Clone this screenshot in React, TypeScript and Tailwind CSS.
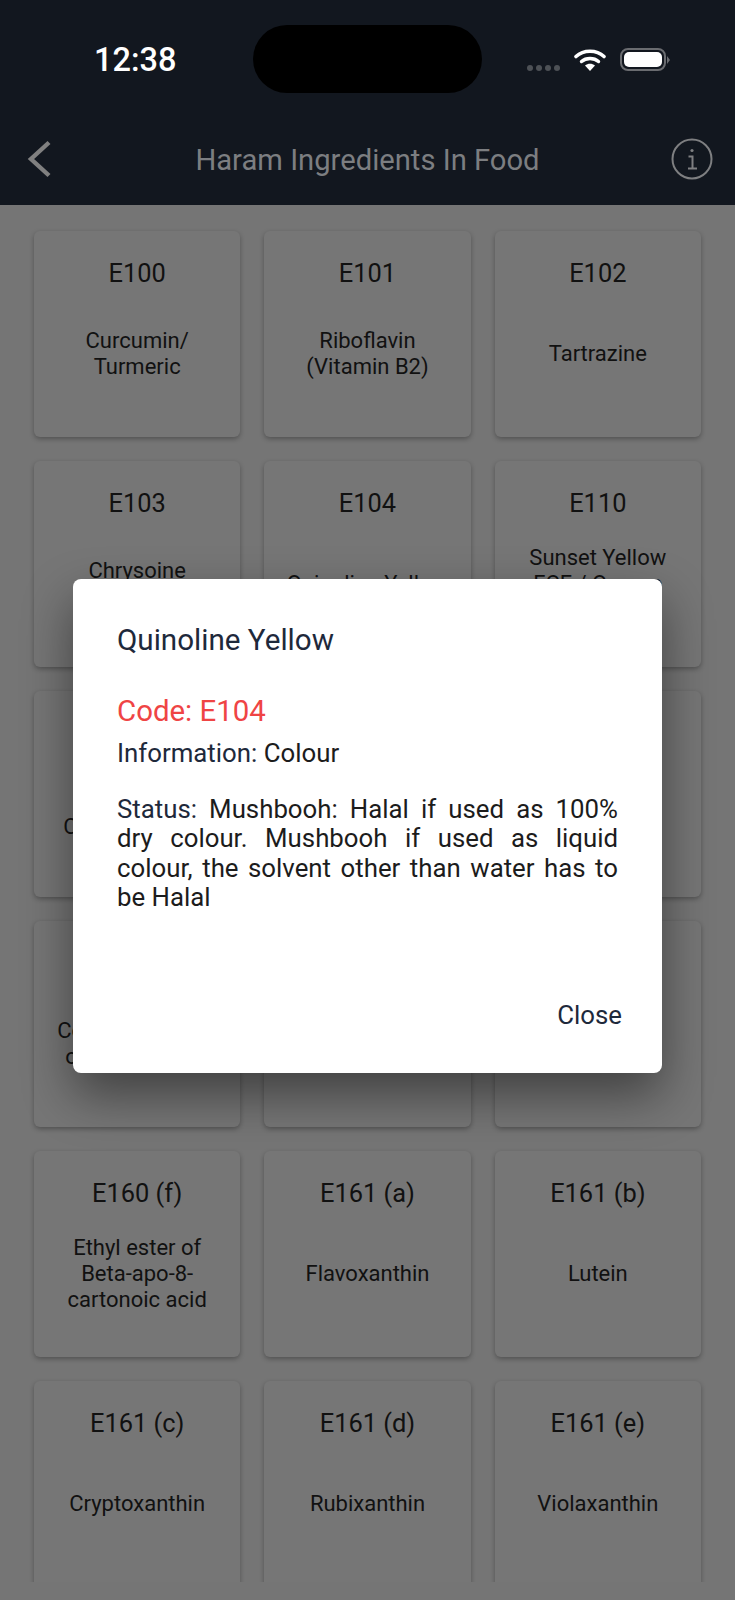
import { ReactNode } from 'react'

const items = [
  { code: 'E100', name: 'Curcumin/ Turmeric' },
  { code: 'E101', name: 'Riboflavin (Vitamin B2)' },
  { code: 'E102', name: 'Tartrazine' },
  { code: 'E103', name: 'Chrysoine Resorcinol' },
  { code: 'E104', name: 'Quinoline Yellow' },
  { code: 'E110', name: 'Sunset Yellow FCF / Orange Yellow S' },
  { code: 'E120', name: 'Cochineal / Carminic Acids' },
  { code: 'E122', name: 'Carmoisine' },
  { code: 'E123', name: 'Amaranth' },
  { code: 'E141', name: 'Copper complex of chlorophylls' },
  { code: 'E160 (a)', name: 'Alpha, Beta, Gamma Carotene' },
  { code: 'E160 (e)', name: 'Beta-apo-8-carotenal' },
  { code: 'E160 (f)', name: 'Ethyl ester of Beta-apo-8-cartonoic acid' },
  { code: 'E161 (a)', name: 'Flavoxanthin' },
  { code: 'E161 (b)', name: 'Lutein' },
  { code: 'E161 (c)', name: 'Cryptoxanthin' },
  { code: 'E161 (d)', name: 'Rubixanthin' },
  { code: 'E161 (e)', name: 'Violaxanthin' },
]

function StatusIcons() {
  return (
    <div className="flex items-start pl-[45px] pt-[48px]">
      <div className="mt-[17px] flex gap-[3px]">
        {[0, 1, 2, 3].map((i) => (
          <span key={i} className="h-[6px] w-[6px] rounded-full bg-[#4d5156]" />
        ))}
      </div>
      <svg className="ml-[14px]" width="32" height="23" viewBox="0 0 32 23" fill="none">
        <path d="M2 8.5C9.5 1.5 22.5 1.5 30 8.5" stroke="white" strokeWidth="3.6" strokeLinecap="round" />
        <path d="M7.5 13.5C12 9.5 20 9.5 24.5 13.5" stroke="white" strokeWidth="3.4" strokeLinecap="round" />
        <path d="M11 17.5C14 15 18 15 21 17.5L16 23Z" fill="white" />
      </svg>
      <div className="ml-[14px] flex items-center">
        <div className="h-[23px] w-[46px] rounded-[8px] border-2 border-[#6a6c70] p-[2px]">
          <div className="h-full w-full rounded-[5px] bg-white" />
        </div>
        <span className="ml-[1px] h-0 w-0 border-y-[4px] border-l-[3px] border-y-transparent border-l-[#6a6c70]" />
      </div>
    </div>
  )
}

function Header() {
  return (
    <header className="h-[205px] bg-[#12171f]">
      <div className="grid h-[119px] grid-cols-[1fr_229px_1fr]">
        <div className="pl-[94px] pt-[40px] text-[32.5px] leading-[40px] font-medium text-white">12:38</div>
        <div className="mt-[25px] h-[68px] rounded-[34px] bg-black" />
        <StatusIcons />
      </div>
      <div className="grid h-[80px] grid-cols-[1fr_auto_1fr] items-center">
        <svg className="ml-[27px]" width="26" height="38" viewBox="0 0 26 38" fill="none">
          <path d="M22 2.5L4 19L22 35.5" stroke="#808080" strokeWidth="4.4" />
        </svg>
        <h1 className="pt-[3px] text-[29.2px] font-normal text-[#7c7e81]">Haram Ingredients In Food</h1>
        <svg className="mr-[22px] justify-self-end" width="42" height="42" viewBox="0 0 42 42" fill="none" stroke="#7e7f81" strokeWidth="2">
          <circle cx="21" cy="21" r="19.5" />
          <path d="M17.5 18.5H21.5V30M17 30.5H26" />
          <circle cx="21" cy="12.5" r="1.6" fill="#7e7f81" stroke="none" />
        </svg>
      </div>
    </header>
  )
}

function Card({ code, children }: { code: string; children: ReactNode }) {
  return (
    <div className="flex h-[206px] flex-col rounded-[6px] bg-[#767676] px-[16px] pt-[26px] text-center text-[#111111] shadow-[0_2px_5px_rgba(0,0,0,0.3)]">
      <div className="text-[25.4px] leading-[32px]">{code}</div>
      <div className="flex h-[130px] items-center justify-center text-[22px] leading-[26px]">
        <span>{children}</span>
      </div>
    </div>
  )
}

export default function App() {
  return (
    <div className="relative h-[1600px] w-[735px] overflow-hidden bg-[#757575] font-['Roboto',sans-serif]">
      <Header />
      <main className="h-[1377px] overflow-hidden px-[34px] pt-[26px]">
        <div className="grid grid-cols-3 gap-[24px]">
          {items.map((item) => (
            <Card key={item.code} code={item.code}>
              {item.name}
            </Card>
          ))}
        </div>
      </main>

      <div className="absolute left-[73px] top-[579px] flex h-[494px] w-[589px] flex-col rounded-[8px] bg-white pl-[44px] pr-[44px] pt-[43px] shadow-[0_22px_50px_rgba(0,0,0,0.45)]">
        <h2 className="text-[29.6px] leading-[36px] font-normal text-[#1e293b]">Quinoline Yellow</h2>
        <p className="mt-[35px] text-[29.4px] leading-[36px] text-[#ef4444]">Code: E104</p>
        <p className="mt-[9px] text-[25.8px] leading-[30px] text-[#1e293b]">
          Information: <span className="text-[#1c1c1c]">Colour</span>
        </p>
        <p className="mt-[27px] text-justify text-[25.8px] leading-[29.4px] text-[#1c1c1c]">
          <span className="text-[#1e293b]">Status:</span> Mushbooh: Halal if used as 100% dry colour. Mushbooh if used as
          liquid colour, the solvent other than water has to be Halal
        </p>
        <button className="absolute bottom-[42px] right-[40px] text-[25.8px] leading-[32px] font-normal text-[#1e293b]">Close</button>
      </div>
    </div>
  )
}
